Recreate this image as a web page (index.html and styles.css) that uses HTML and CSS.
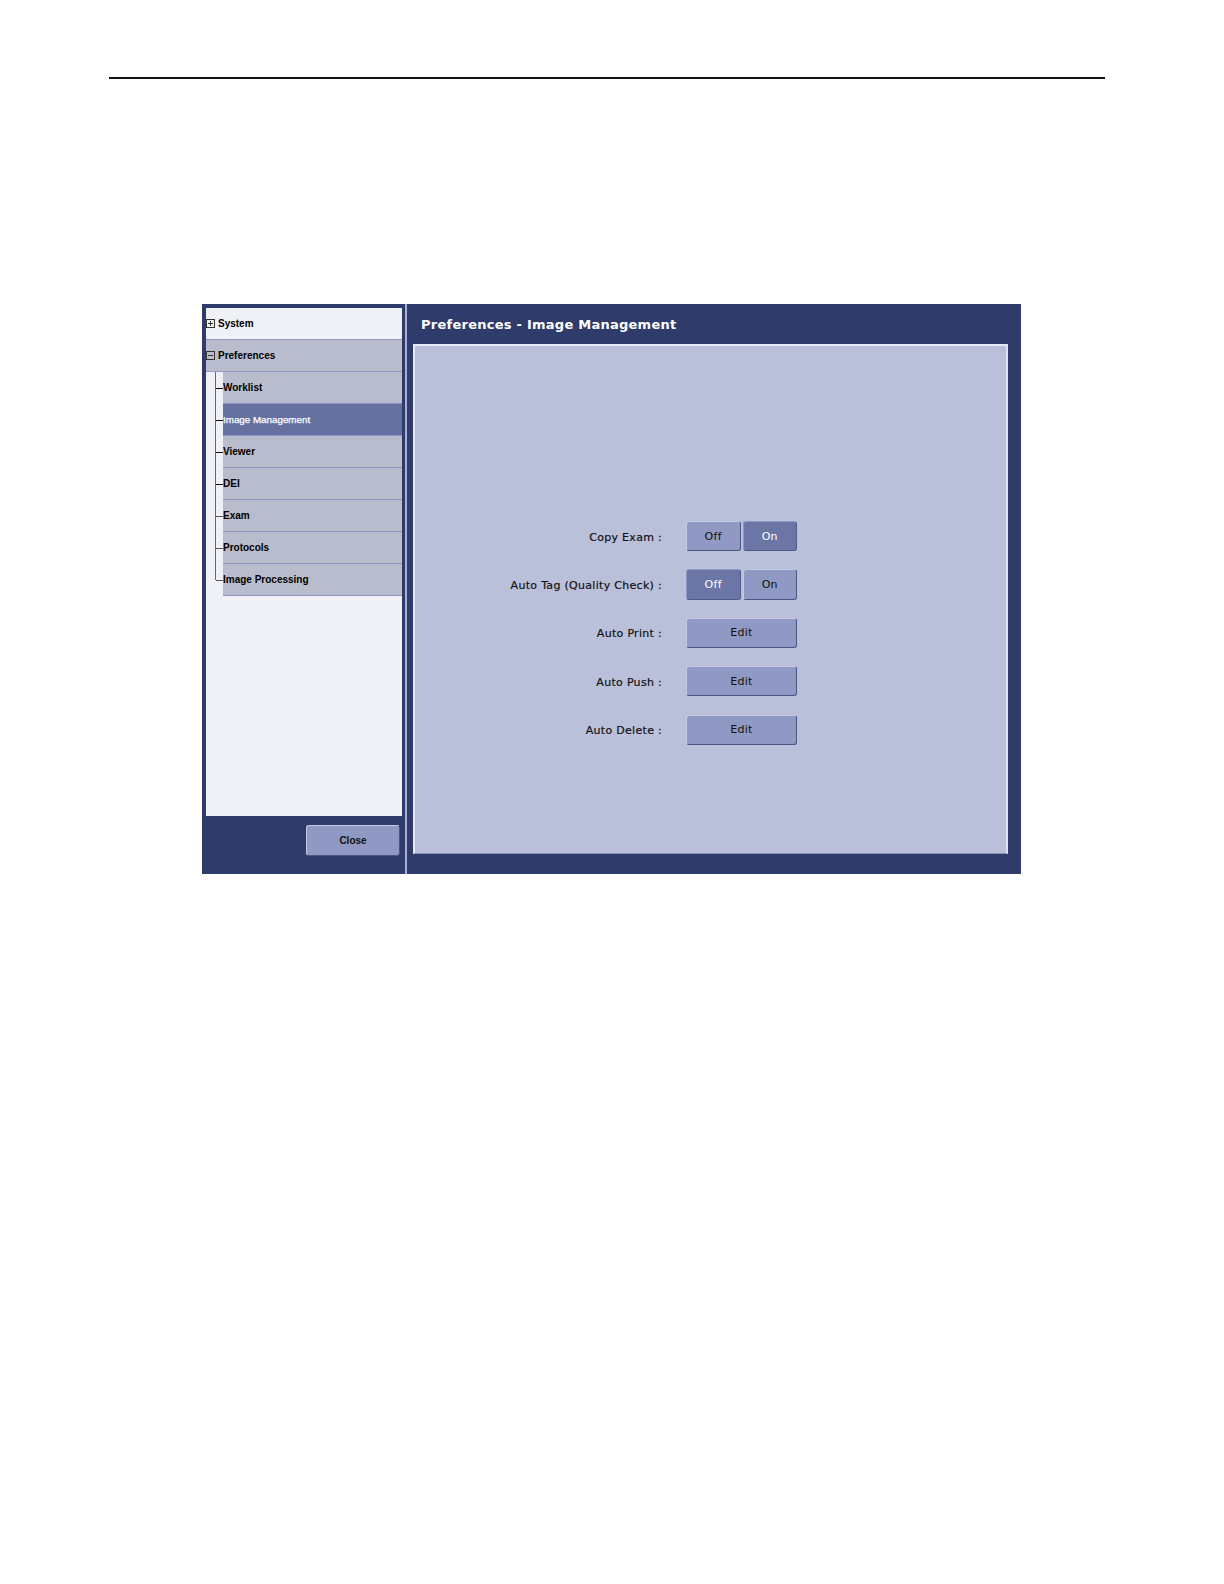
FILE: index.html
```html
<!DOCTYPE html>
<html>
<head>
<meta charset="utf-8">
<link rel="stylesheet" href="styles.css">
</head>
<body>
<div class="page">
  <div class="rule"></div>
  <div class="window">
    <div class="left">
      <div class="tree">
        <div class="row top">
          <svg class="box" width="9" height="9" viewBox="0 0 9 9"><rect x="0.5" y="0.5" width="8" height="8" fill="none" stroke="#333" stroke-width="1"/><path d="M2 4.5H7M4.5 2V7" stroke="#333" stroke-width="1"/></svg>
          <span class="label">System</span>
        </div>
        <div class="row top gray">
          <svg class="box" width="9" height="9" viewBox="0 0 9 9"><rect x="0.5" y="0.5" width="8" height="8" fill="none" stroke="#333" stroke-width="1"/><path d="M2 4.5H7" stroke="#333" stroke-width="1"/></svg>
          <span class="label">Preferences</span>
        </div>
        <div class="row child"><div class="gutter"><div class="stem"><div class="tick bold"></div></div></div><div class="item">Worklist</div></div>
        <div class="row child"><div class="gutter"><div class="stem"><div class="tick bold"></div></div></div><div class="item sel">Image Management</div></div>
        <div class="row child"><div class="gutter"><div class="stem"><div class="tick bold"></div></div></div><div class="item">Viewer</div></div>
        <div class="row child"><div class="gutter"><div class="stem"><div class="tick bold"></div></div></div><div class="item">DEI</div></div>
        <div class="row child"><div class="gutter"><div class="stem"><div class="tick"></div></div></div><div class="item">Exam</div></div>
        <div class="row child"><div class="gutter"><div class="stem"><div class="tick"></div></div></div><div class="item">Protocols</div></div>
        <div class="row child"><div class="gutter"><div class="stem last"><div class="tick"></div></div></div><div class="item">Image Processing</div></div>
      </div>
      <div class="footer"><div class="btn close">Close</div></div>
    </div>
    <div class="sep"></div>
    <div class="right">
      <div class="title">Preferences - Image Management</div>
      <div class="content">
        <div class="settings">
          <div class="lbl">Copy Exam :</div>
          <div class="ctl"><div class="btn half">Off</div><div class="btn half on">On</div></div>
          <div class="lbl">Auto Tag (Quality Check) :</div>
          <div class="ctl"><div class="btn half on">Off</div><div class="btn half">On</div></div>
          <div class="lbl">Auto Print :</div>
          <div class="ctl"><div class="btn full">Edit</div></div>
          <div class="lbl">Auto Push :</div>
          <div class="ctl"><div class="btn full">Edit</div></div>
          <div class="lbl">Auto Delete :</div>
          <div class="ctl"><div class="btn full">Edit</div></div>
        </div>
      </div>
    </div>
  </div>
</div>
</body>
</html>
```
FILE: styles.css
```css
html, body {
  margin: 0;
  padding: 0;
  background: #ffffff;
}
.page {
  padding-top: 77px;
}
.rule {
  margin-left: 109px;
  width: 996px;
  height: 2px;
  background: #111;
}
.window {
  margin-top: 225px;
  margin-left: 202px;
  width: 819px;
  height: 570px;
  background: #2f3b6b;
  display: flex;
}
.left {
  width: 199px;
  padding: 4px 0 0 4px;
  display: flex;
  flex-direction: column;
}
.tree {
  width: 196px;
  height: 508px;
  background: #eff1f7;
  font-family: "Liberation Sans", Arial, sans-serif;
  font-weight: bold;
  font-size: 10px;
  color: #000;
}
.row {
  height: 31px;
  display: flex;
  align-items: center;
}
.row.top {
  border-bottom: 1px solid #9299c2;
}
.row.gray {
  background: #b8bccc;
}
.box {
  display: block;
  margin-left: 0;
  margin-right: 3px;
  flex: none;
}
.row.child {
  align-items: stretch;
  height: 32px;
}
.gutter {
  width: 17px;
  padding-left: 9px;
  box-sizing: border-box;
  flex: none;
}
.stem {
  height: 100%;
  border-left: 1px solid #666;
  width: 7px;
}
.stem.last {
  height: 50%;
}
.tick {
  height: 50%;
  border-bottom: 1px solid #555;
  width: 7px;
}
.tick.bold {
  border-bottom-color: #000;
}
.stem.last .tick {
  height: 100%;
}
.item {
  flex: 1;
  background: #b8bccc;
  border-bottom: 1px solid #8d95c2;
  display: flex;
  align-items: center;
}
.item.sel {
  background: #6670a1;
  color: #fff;
  font-weight: normal;
  font-size: 9.8px;
  -webkit-text-stroke: 0.25px #fff;
}
.footer {
  display: flex;
  justify-content: flex-end;
  padding-top: 9px;
  padding-right: 5px;
}
.btn {
  display: flex;
  align-items: center;
  justify-content: center;
  box-sizing: border-box;
  background: #8f99c3;
  border: 1px solid #4b5584;
  border-top-color: #c3c9e4;
  border-left-color: #c3c9e4;
  border-radius: 3px;
  color: #111;
}
.btn.close {
  width: 94px;
  height: 31px;
  font-family: "Liberation Sans", Arial, sans-serif;
  font-weight: bold;
  font-size: 10px;
}
.sep {
  width: 2px;
  background: #a9b0d6;
}
.right {
  flex: 1;
  display: flex;
  flex-direction: column;
}
.title {
  height: 40px;
  padding-left: 14px;
  display: flex;
  align-items: center;
  color: #fff;
  font-family: "DejaVu Sans", sans-serif;
  font-weight: bold;
  font-size: 13px;
  letter-spacing: 0.25px;
}
.content {
  margin-left: 6px;
  width: 595px;
  height: 510px;
  box-sizing: border-box;
  background: #bac0da;
  border: 1px solid #8a90ad;
  border-top: 2px solid #e6e9f4;
  border-left: 2px solid #e6e9f4;
  border-right: 2px solid #dfe2ef;
  padding-top: 175px;
}
.settings {
  display: grid;
  grid-template-columns: 247px 111px;
  column-gap: 24px;
  row-gap: 18.1px;
  grid-auto-rows: 30.3px;
  font-family: "DejaVu Sans", sans-serif;
  font-size: 11px;
  letter-spacing: 0.3px;
  color: #111;
}
.lbl {
  display: flex;
  align-items: center;
  justify-content: flex-end;
  padding-top: 2px;
  -webkit-text-stroke: 0.2px #111;
}
.ctl {
  display: flex;
  gap: 2px;
}
.btn.half {
  width: 54.5px;
  height: 30.3px;
}
.btn.full {
  width: 111px;
  height: 30.3px;
}
.btn.on {
  background: #6b75a6;
  color: #fff;
  border-color: #505a8a;
  border-top-color: #8d96c4;
  border-left-color: #8d96c4;
}
```
